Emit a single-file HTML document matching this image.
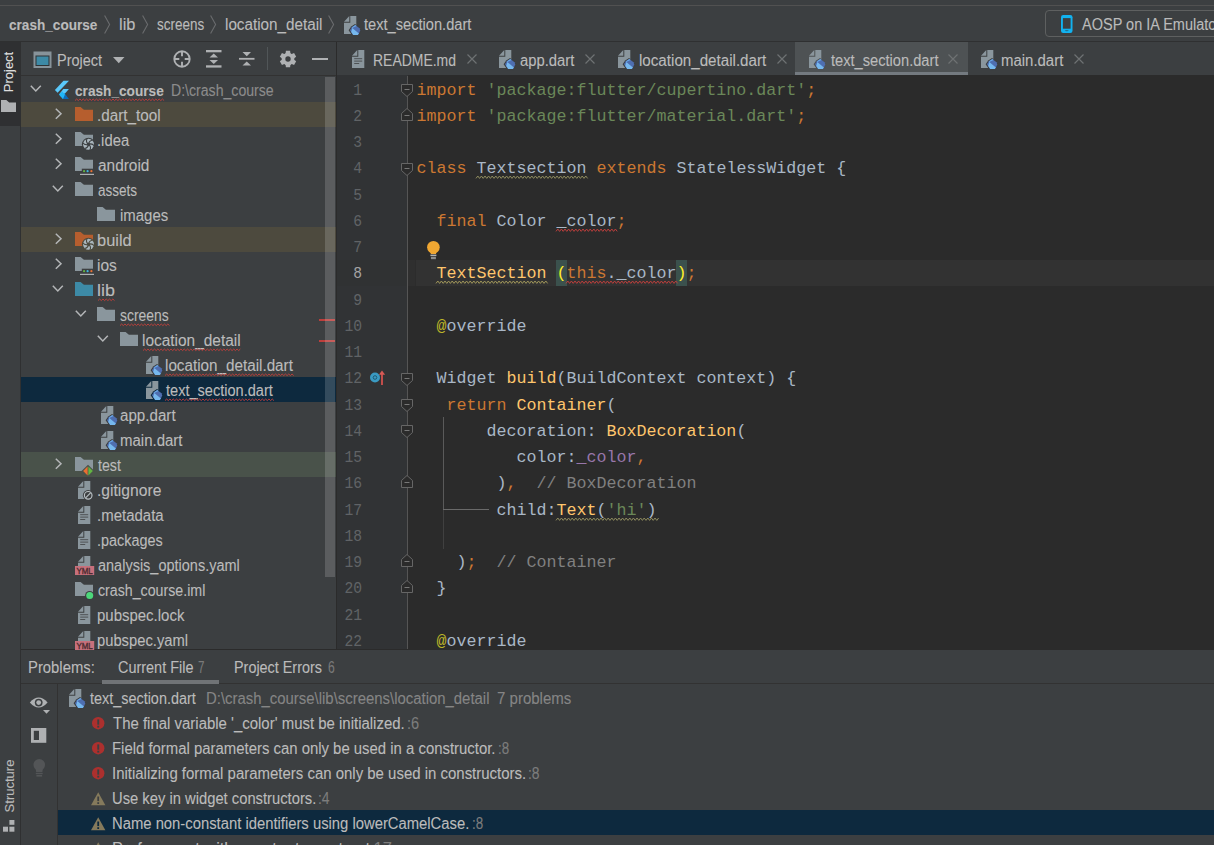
<!DOCTYPE html><html><head><meta charset="utf-8"><style>
*{margin:0;padding:0;box-sizing:border-box}
html,body{width:1214px;height:845px;overflow:hidden;background:#3c3f41;font-family:"Liberation Sans",sans-serif;font-size:14.4px;color:#bbbbbb}
.a{position:absolute}
.t{position:absolute;white-space:pre;line-height:20px;height:20px;transform-origin:0 50%;-webkit-text-stroke:0.1px currentColor}
svg{position:absolute;overflow:visible}
.cd{position:absolute;left:416.5px;font-family:"Liberation Mono",monospace;font-size:16.67px;white-space:pre;line-height:20px;color:#a9b7c6}
.ln{position:absolute;font-family:"Liberation Mono",monospace;font-size:16.67px;white-space:pre;line-height:20px;color:#606366;text-align:right;width:40px;left:321.5px;transform:scaleX(0.88);transform-origin:100% 50%}
.k{color:#cc7832}.s{color:#6a8759}.f{color:#ffc66d}.c{color:#808080}.p{color:#9876aa}.an{color:#bbb529}
</style></head><body><div class="a" style="left:0px;top:5px;width:1214px;height:1px;background:#515151;"></div>
<div class="a" style="left:0px;top:41px;width:1214px;height:1px;background:#2f3031;"></div>
<div class="a" style="left:0px;top:42px;width:20px;height:84px;background:#2f3032;"></div>
<div class="a" style="left:20px;top:42px;width:1px;height:803px;background:#2f3031;"></div>
<div class="a" style="left:21px;top:75px;width:315px;height:1px;background:#323232;"></div>
<div class="a" style="left:336px;top:42px;width:1px;height:608px;background:#2b2b2b;"></div>
<div class="a" style="left:337px;top:75px;width:877px;height:575px;background:#2b2b2b;"></div>
<div class="a" style="left:337px;top:75px;width:71px;height:575px;background:#313335;"></div>
<div class="a" style="left:408px;top:260px;width:806px;height:26px;background:#323232;"></div>
<div class="a" style="left:337px;top:260px;width:71px;height:26px;background:#303233;"></div>
<div class="a" style="left:408px;top:260px;width:7px;height:26px;background:#2f2f2f;"></div>
<div class="a" style="left:415px;top:260px;width:1px;height:26px;background:#2c2c2c;"></div>
<div class="a" style="left:556px;top:260px;width:11px;height:26px;background:#3b514d;"></div>
<div class="a" style="left:676px;top:260px;width:11px;height:26px;background:#3b514d;"></div>
<div class="a" style="left:795px;top:42px;width:173px;height:33px;background:#4e5254;"></div>
<div class="a" style="left:795px;top:72px;width:173px;height:3px;background:#747a80;"></div>
<div class="a" style="left:21px;top:649px;width:1193px;height:1px;background:#2b2b2b;"></div>
<div class="a" style="left:21px;top:683px;width:1193px;height:1px;background:#323232;"></div>
<div class="a" style="left:57px;top:684px;width:1px;height:161px;background:#323232;"></div>
<div class="a" style="left:102px;top:680px;width:117px;height:4px;background:#707376;"></div>
<div class="a" style="left:58px;top:810px;width:1156px;height:25px;background:#0d293e;"></div>
<div class="a" style="left:21px;top:102px;width:315px;height:25px;background:#4d4a3e;"></div>
<div class="a" style="left:21px;top:227px;width:315px;height:25px;background:#4d4a3e;"></div>
<div class="a" style="left:21px;top:377px;width:315px;height:25px;background:#0d293e;"></div>
<div class="a" style="left:21px;top:452px;width:315px;height:25px;background:#49524a;"></div>
<div class="t" id="t0" style="left:9.06px;top:14.56px;font-size:15.4px;font-weight:bold;transform:scaleX(0.8830);">crash_course</div>
<div class="t" id="t1" style="left:119.17px;top:15.39px;font-size:15.6px;transform:scaleX(1.0533);">lib</div>
<div class="t" id="t2" style="left:157.00px;top:15.39px;font-size:15.6px;transform:scaleX(0.8636);">screens</div>
<div class="t" id="t3" style="left:224.80px;top:15.39px;font-size:15.6px;transform:scaleX(0.9778);">location_detail</div>
<div class="t" id="t4" style="left:364.38px;top:15.39px;font-size:15.6px;transform:scaleX(0.9383);">text_section.dart</div>
<div class="t" id="t5" style="left:1082.30px;top:15.29px;font-size:15.6px;transform:scaleX(0.93)">AOSP on IA Emulator</div>
<div class="t" id="t6" style="left:57.04px;top:50.79px;font-size:15.6px;transform:scaleX(0.9286);">Project</div>
<div class="a" style="left:0;top:0;width:1214px;height:845px;clip-path:inset(76px 878px 196px 21px)">
<div class="t" id="t7" style="left:74.86px;top:80.56px;font-size:15.4px;font-weight:bold;transform:scaleX(0.8870);">crash_course</div>
<div class="t" id="t8" style="left:171.05px;top:81.29px;font-size:15.6px;color:#8c8c8c;transform:scaleX(0.9044);">D:\crash_course</div>
<div class="t" id="t9" style="left:96.81px;top:106.29px;font-size:15.6px;transform:scaleX(0.9781);">.dart_tool</div>
<div class="t" id="t10" style="left:96.84px;top:131.29px;font-size:15.6px;transform:scaleX(0.9515);">.idea</div>
<div class="t" id="t11" style="left:97.79px;top:156.29px;font-size:15.6px;transform:scaleX(0.9885);">android</div>
<div class="t" id="t12" style="left:97.81px;top:181.29px;font-size:15.6px;transform:scaleX(0.8667);">assets</div>
<div class="t" id="t13" style="left:119.82px;top:206.29px;font-size:15.6px;transform:scaleX(0.9580);">images</div>
<div class="t" id="t14" style="left:96.73px;top:231.29px;font-size:15.6px;transform:scaleX(1.0531);">build</div>
<div class="t" id="t15" style="left:96.80px;top:256.29px;font-size:15.6px;transform:scaleX(0.9947);">ios</div>
<div class="t" id="t16" style="left:96.62px;top:281.29px;font-size:15.6px;transform:scaleX(1.1500);">lib</div>
<div class="t" id="t17" style="left:119.86px;top:306.29px;font-size:15.6px;transform:scaleX(0.8907);">screens</div>
<div class="t" id="t18" style="left:141.80px;top:331.29px;font-size:15.6px;transform:scaleX(0.9898);">location_detail</div>
<div class="t" id="t19" style="left:164.80px;top:356.29px;font-size:15.6px;transform:scaleX(0.9771);">location_detail.dart</div>
<div class="t" id="t20" style="left:165.76px;top:381.29px;font-size:15.6px;transform:scaleX(0.9339);">text_section.dart</div>
<div class="t" id="t21" style="left:119.81px;top:406.29px;font-size:15.6px;transform:scaleX(0.9719);">app.dart</div>
<div class="t" id="t22" style="left:119.81px;top:431.29px;font-size:15.6px;transform:scaleX(0.9615);">main.dart</div>
<div class="t" id="t23" style="left:97.80px;top:456.29px;font-size:15.6px;transform:scaleX(0.9115);">test</div>
<div class="t" id="t24" style="left:96.79px;top:481.29px;font-size:15.6px;transform:scaleX(1.0032);">.gitignore</div>
<div class="t" id="t25" style="left:96.83px;top:506.29px;font-size:15.6px;transform:scaleX(0.9609);">.metadata</div>
<div class="t" id="t26" style="left:96.88px;top:531.29px;font-size:15.6px;transform:scaleX(0.9229);">.packages</div>
<div class="t" id="t27" style="left:97.80px;top:556.29px;font-size:15.6px;transform:scaleX(0.9296);">analysis_options.yaml</div>
<div class="t" id="t28" style="left:97.80px;top:581.29px;font-size:15.6px;transform:scaleX(0.9103);">crash_course.iml</div>
<div class="t" id="t29" style="left:96.84px;top:606.29px;font-size:15.6px;transform:scaleX(0.9600);">pubspec.lock</div>
<div class="t" id="t30" style="left:96.85px;top:631.29px;font-size:15.6px;transform:scaleX(0.9463);">pubspec.yaml</div>
</div>
<div class="t" id="t31" style="left:373.05px;top:50.79px;font-size:15.6px;transform:scaleX(0.8946);">README.md</div>
<div class="t" id="t32" style="left:520.00px;top:50.79px;font-size:15.6px;transform:scaleX(0.9500);">app.dart</div>
<div class="t" id="t33" style="left:639.01px;top:50.79px;font-size:15.6px;transform:scaleX(0.9718);">location_detail.dart</div>
<div class="t" id="t34" style="left:830.97px;top:50.79px;font-size:15.6px;transform:scaleX(0.9391);">text_section.dart</div>
<div class="t" id="t35" style="left:1001.04px;top:50.79px;font-size:15.6px;transform:scaleX(0.9585);">main.dart</div>
<div class="t" id="t36" style="left:28.45px;top:658.39px;font-size:15.6px;transform:scaleX(0.9515);">Problems:</div>
<div class="t" id="t37" style="left:118.00px;top:658.39px;font-size:15.6px;transform:scaleX(0.9259);">Current File</div>
<div class="t" id="t38" style="left:198.00px;top:658.39px;font-size:15.6px;color:#7a7a7a;transform:scaleX(0.7444);">7</div>
<div class="t" id="t39" style="left:233.84px;top:658.39px;font-size:15.6px;transform:scaleX(0.9221);">Project Errors</div>
<div class="t" id="t40" style="left:328.00px;top:658.39px;font-size:15.6px;color:#7a7a7a;transform:scaleX(0.7778);">6</div>
<div class="t" id="t41" style="left:90.15px;top:689.49px;font-size:15.6px;transform:scaleX(0.9241);">text_section.dart</div>
<div class="t" id="t42" style="left:205.63px;top:689.49px;font-size:15.6px;color:#858585;transform:scaleX(0.9563);">D:\crash_course\lib\screens\location_detail</div>
<div class="t" id="t43" style="left:112.77px;top:714.49px;font-size:15.6px;transform:scaleX(0.9592);">The final variable '_color' must be initialized.</div>
<div class="t" id="t44" style="left:407.07px;top:714.49px;font-size:15.6px;color:#7d7d7d;transform:scaleX(0.9333);">:6</div>
<div class="t" id="t45" style="left:111.82px;top:739.49px;font-size:15.6px;transform:scaleX(0.9555);">Field formal parameters can only be used in a constructor.</div>
<div class="t" id="t46" style="left:497.57px;top:739.49px;font-size:15.6px;color:#7d7d7d;transform:scaleX(0.8583);">:8</div>
<div class="t" id="t47" style="left:111.82px;top:764.49px;font-size:15.6px;transform:scaleX(0.9595);">Initializing formal parameters can only be used in constructors.</div>
<div class="t" id="t48" style="left:528.48px;top:764.49px;font-size:15.6px;color:#7d7d7d;transform:scaleX(0.8917);">:8</div>
<div class="t" id="t49" style="left:111.82px;top:789.49px;font-size:15.6px;transform:scaleX(0.9467);">Use key in widget constructors.</div>
<div class="t" id="t50" style="left:318.29px;top:789.49px;font-size:15.6px;color:#7d7d7d;transform:scaleX(0.8917);">:4</div>
<div class="t" id="t51" style="left:111.82px;top:814.49px;font-size:15.6px;transform:scaleX(0.9499);">Name non-constant identifiers using lowerCamelCase.</div>
<div class="t" id="t52" style="left:471.57px;top:814.49px;font-size:15.6px;color:#7d7d7d;transform:scaleX(0.8583);">:8</div>
<div class="t" id="t53" style="left:111.76px;top:839.49px;font-size:15.6px;transform:scaleX(1.0449);">Prefer const with constant constructors.</div>
<div class="t" id="t54" style="left:368.71px;top:839.49px;font-size:15.6px;color:#7d7d7d;transform:scaleX(1.0588);">:17</div>
<div class="t" id="t55" style="left:496.81px;top:689.49px;font-size:15.6px;color:#858585;transform:scaleX(0.9636);">7 problems</div>
<div class="t" style="left:-15.9px;top:62.2px;width:50px;height:20px;transform:rotate(-90deg);transform-origin:50% 50%;color:#dddddd;font-size:13px;text-align:center">Project</div>
<div class="t" style="left:-15.2px;top:776.4px;width:60px;height:20px;transform:rotate(-90deg);transform-origin:50% 50%;color:#bbbbbb;font-size:13px;text-align:center;margin-left:-5px">Structure</div>
<div class="ln" style="top:80.56px;">1</div>
<div class="cd" style="top:80.56px"><span class="k">import </span><span class="s">'package:flutter/cupertino.dart'</span><span class="k">;</span></div>
<div class="ln" style="top:106.81px;">2</div>
<div class="cd" style="top:106.81px"><span class="k">import </span><span class="s">'package:flutter/material.dart'</span><span class="k">;</span></div>
<div class="ln" style="top:133.06px;">3</div>
<div class="cd" style="top:133.06px"></div>
<div class="ln" style="top:159.31px;">4</div>
<div class="cd" style="top:159.31px"><span class="k">class </span>Textsection <span class="k">extends </span>StatelessWidget {</div>
<div class="ln" style="top:185.56px;">5</div>
<div class="cd" style="top:185.56px"></div>
<div class="ln" style="top:211.81px;">6</div>
<div class="cd" style="top:211.81px">  <span class="k">final </span>Color _color<span class="k">;</span></div>
<div class="ln" style="top:238.06px;">7</div>
<div class="cd" style="top:238.06px"></div>
<div class="ln" style="top:264.31px;color:#a4a3a3">8</div>
<div class="cd" style="top:264.31px">  <span class="f">TextSection</span> <span style="color:#ffef28">(</span><span class="k">this</span>._color<span style="color:#ffef28">)</span><span class="k">;</span></div>
<div class="ln" style="top:290.56px;">9</div>
<div class="cd" style="top:290.56px"></div>
<div class="ln" style="top:316.81px;">10</div>
<div class="cd" style="top:316.81px">  <span class="an">@</span>override</div>
<div class="ln" style="top:343.06px;">11</div>
<div class="cd" style="top:343.06px"></div>
<div class="ln" style="top:369.31px;">12</div>
<div class="cd" style="top:369.31px">  Widget <span class="f">build</span>(BuildContext context) {</div>
<div class="ln" style="top:395.56px;">13</div>
<div class="cd" style="top:395.56px">   <span class="k">return </span><span class="f">Container</span>(</div>
<div class="ln" style="top:421.81px;">14</div>
<div class="cd" style="top:421.81px">       decoration: <span class="f">BoxDecoration</span>(</div>
<div class="ln" style="top:448.06px;">15</div>
<div class="cd" style="top:448.06px">          color:<span class="p">_color</span><span class="k">,</span></div>
<div class="ln" style="top:474.31px;">16</div>
<div class="cd" style="top:474.31px">        )<span class="k">,  </span><span class="c">// BoxDecoration</span></div>
<div class="ln" style="top:500.56px;">17</div>
<div class="cd" style="top:500.56px">        child:<span class="f">Text</span>(<span class="s">'hi'</span>)</div>
<div class="ln" style="top:526.81px;">18</div>
<div class="cd" style="top:526.81px"></div>
<div class="ln" style="top:553.06px;">19</div>
<div class="cd" style="top:553.06px">    )<span class="k">;  </span><span class="c">// Container</span></div>
<div class="ln" style="top:579.31px;">20</div>
<div class="cd" style="top:579.31px">  }</div>
<div class="ln" style="top:605.56px;">21</div>
<div class="cd" style="top:605.56px"></div>
<div class="ln" style="top:631.81px;">22</div>
<div class="cd" style="top:631.81px">  <span class="an">@</span>override</div>
<svg style="left:103.8px;top:14.5px" width="7" height="20" viewBox="0 0 7 20"><path d="M0.6 0.6L5.6 9.5L0.6 18.4" fill="none" stroke="#6a6c6e" stroke-width="1.1"/></svg>
<svg style="left:142.3px;top:14.5px" width="7" height="20" viewBox="0 0 7 20"><path d="M0.6 0.6L5.6 9.5L0.6 18.4" fill="none" stroke="#6a6c6e" stroke-width="1.1"/></svg>
<svg style="left:210px;top:14.5px" width="7" height="20" viewBox="0 0 7 20"><path d="M0.6 0.6L5.6 9.5L0.6 18.4" fill="none" stroke="#6a6c6e" stroke-width="1.1"/></svg>
<svg style="left:328px;top:14.5px" width="7" height="20" viewBox="0 0 7 20"><path d="M0.6 0.6L5.6 9.5L0.6 18.4" fill="none" stroke="#6a6c6e" stroke-width="1.1"/></svg>
<svg style="left:344px;top:15.5px" width="20" height="20" viewBox="0 0 20 20"><path d="M0 5.7L5.3 0V5.7Z" fill="#8a969d"/><path d="M6.3 0H12.3V18H0V6.7H6.3Z" fill="#8a969d"/><path d="M4.6 14.3L7.2 10.4L11 8L16.4 11.8L17.4 14.6L15.8 18.4L14.4 20.2L8.6 20.1Z" fill="#3c3f41"/><path d="M5.9 14.3L7.9 11.2L11.3 9.1L15.5 12.3L16.2 14.6L14.9 17.5L13.8 19L9.2 18.9Z" fill="#4e6eb0"/><path d="M7.9 11.2L11.3 9.1L12.6 10.1L8.3 12Z" fill="#6aa8e8"/><path d="M8.3 12L14.9 17.5L13.8 19L9.2 18.9L7.2 16Z" fill="#76b8ee"/></svg>
<div class="a" style="left:1045px;top:10px;width:200px;height:27px;border:1px solid #5e6060;border-radius:4px"></div>
<svg style="left:1061.2px;top:15px" width="12" height="18" viewBox="0 0 12 18"><rect x="0" y="0" width="11.5" height="18" rx="2.2" fill="#12b2ef"/><rect x="1.9" y="3.1" width="7.7" height="10.6" fill="#3c3f41"/><ellipse cx="5.75" cy="15.6" rx="1.9" ry="0.7" fill="#1f6f90"/></svg>
<svg style="left:1px;top:99.5px" width="16" height="13" viewBox="0 0 16 13"><path d="M0 0H5.3L8.2 2.5H15V12H0Z" fill="#afb1b3"/></svg>
<svg style="left:2.7px;top:820px" width="14" height="14" viewBox="0 0 14 14"><rect x="6.4" y="0" width="5" height="4.8" fill="#afb1b3"/><rect x="0" y="6.7" width="5" height="5" fill="#afb1b3"/><rect x="6.4" y="6.7" width="5" height="5" fill="#afb1b3"/></svg>
<svg style="left:32.5px;top:51px" width="19" height="17" viewBox="0 0 19 17"><rect x="0.5" y="0.5" width="18" height="16.5" fill="#87939a"/><rect x="2.5" y="4.5" width="14" height="10.5" fill="#2f3335"/><rect x="3.5" y="5.5" width="12" height="8.5" fill="#3d8aa6"/></svg>
<svg style="left:113px;top:57px" width="12" height="7" viewBox="0 0 12 7"><path d="M0 0H11.5L5.75 6.2Z" fill="#afb1b3"/></svg>
<svg style="left:173px;top:50px" width="18" height="18" viewBox="0 0 18 18"><circle cx="9" cy="9" r="7.7" fill="none" stroke="#afb1b3" stroke-width="1.9"/><path d="M9 1.5V6.3M9 11.7V16.5M1.5 9H6.3M11.7 9H16.5" stroke="#afb1b3" stroke-width="1.9"/></svg>
<svg style="left:206px;top:50px" width="16" height="18" viewBox="0 0 16 18"><rect x="0" y="0" width="15.5" height="2.3" fill="#afb1b3"/><rect x="0" y="15.3" width="15.5" height="2.3" fill="#afb1b3"/><path d="M3.5 7.6L7.75 3.6L12 7.6Z M3.5 10L7.75 14L12 10Z" fill="#afb1b3"/></svg>
<svg style="left:239px;top:50px" width="16" height="18" viewBox="0 0 16 18"><rect x="0" y="7.9" width="15.5" height="1.8" fill="#afb1b3"/><path d="M3.5 2L7.75 6.2L12 2Z M3.5 15.6L7.75 11.4L12 15.6Z" fill="#afb1b3"/></svg>
<div class="a" style="left:267px;top:47px;width:1px;height:23px;background:#515658;"></div>
<svg style="left:279px;top:50px" width="18" height="18" viewBox="0 0 18 18"><g fill="#afb1b3"><path d="M6.9 0.8H11.1L11.6 4.5H6.4Z" transform="rotate(0 9 9)"/><path d="M6.9 0.8H11.1L11.6 4.5H6.4Z" transform="rotate(60 9 9)"/><path d="M6.9 0.8H11.1L11.6 4.5H6.4Z" transform="rotate(120 9 9)"/><path d="M6.9 0.8H11.1L11.6 4.5H6.4Z" transform="rotate(180 9 9)"/><path d="M6.9 0.8H11.1L11.6 4.5H6.4Z" transform="rotate(240 9 9)"/><path d="M6.9 0.8H11.1L11.6 4.5H6.4Z" transform="rotate(300 9 9)"/><circle cx="9" cy="9" r="6.3"/></g><circle cx="9" cy="9" r="2.7" fill="#3c3f41"/></svg>
<div class="a" style="left:312.3px;top:58px;width:15.4px;height:2.3px;background:#afb1b3;"></div>
<svg style="left:29.500000000000007px;top:85.4px" width="12" height="8" viewBox="0 0 12 8"><path d="M0.8 0.8L5.8 6L10.8 0.8" fill="none" stroke="#b4b6b8" stroke-width="1.5"/></svg>
<svg style="left:49.900000000000006px;top:80px" width="20" height="20" viewBox="0 0 20 20"><path d="M4.9 9.9L13.5 0.8H19L7.6 12.7Z" fill="#5ac8fa"/><path d="M13.3 9.1H18.9L14.8 13.7L9 14.5Z" fill="#5ac8fa"/><path d="M9 14.5L14.8 13.5L13 18.9Z" fill="#1eb4f5"/><path d="M12.2 15.8L14.8 13.5L18.9 18.9H13Z" fill="#0b6ab8"/><path d="M9 14.5L12.2 11.4L15 14.4L13 18.9Z" fill="#21b6f7"/></svg>
<svg style="left:54.50000000000001px;top:108.3px" width="8" height="12" viewBox="0 0 8 12"><path d="M0.8 0.8L6 5.8L0.8 10.8" fill="none" stroke="#b4b6b8" stroke-width="1.5"/></svg>
<svg style="left:74.9px;top:107px" width="20" height="20" viewBox="0 0 20 20"><path d="M0 0H5.6L8.9 2.7H18V14H0Z" fill="#b65e2e"/></svg>
<svg style="left:54.50000000000001px;top:133.3px" width="8" height="12" viewBox="0 0 8 12"><path d="M0.8 0.8L6 5.8L0.8 10.8" fill="none" stroke="#b4b6b8" stroke-width="1.5"/></svg>
<svg style="left:74.9px;top:132px" width="20" height="20" viewBox="0 0 20 20"><path d="M0 0H5.6L8.9 2.7H18V14H0Z" fill="#8a969d"/><circle cx="13.5" cy="12.3" r="6.6" fill="#3c3f41"/><circle cx="13.5" cy="12.3" r="5.5" fill="#a9b6bd"/><path d="M13.5 12.3 Q14.05 8.450000000000001 17.625 8.175" fill="none" stroke="#3c3f41" stroke-width="1.1" transform="rotate(0 13.5 12.3)"/><path d="M13.5 12.3 Q14.05 8.450000000000001 17.625 8.175" fill="none" stroke="#3c3f41" stroke-width="1.1" transform="rotate(60 13.5 12.3)"/><path d="M13.5 12.3 Q14.05 8.450000000000001 17.625 8.175" fill="none" stroke="#3c3f41" stroke-width="1.1" transform="rotate(120 13.5 12.3)"/><path d="M13.5 12.3 Q14.05 8.450000000000001 17.625 8.175" fill="none" stroke="#3c3f41" stroke-width="1.1" transform="rotate(180 13.5 12.3)"/><path d="M13.5 12.3 Q14.05 8.450000000000001 17.625 8.175" fill="none" stroke="#3c3f41" stroke-width="1.1" transform="rotate(240 13.5 12.3)"/><path d="M13.5 12.3 Q14.05 8.450000000000001 17.625 8.175" fill="none" stroke="#3c3f41" stroke-width="1.1" transform="rotate(300 13.5 12.3)"/><circle cx="13.5" cy="12.3" r="1.65" fill="#3c3f41"/></svg>
<svg style="left:54.50000000000001px;top:158.3px" width="8" height="12" viewBox="0 0 8 12"><path d="M0.8 0.8L6 5.8L0.8 10.8" fill="none" stroke="#b4b6b8" stroke-width="1.5"/></svg>
<svg style="left:74.9px;top:157px" width="20" height="20" viewBox="0 0 20 20"><path d="M0 0H5.6L8.9 2.7H18V14H0Z" fill="#8a969d"/><rect x="6.8" y="11.7" width="12" height="3.6" fill="#3c3f41"/><circle cx="9.1" cy="14.2" r="1.1" fill="#62b543"/><circle cx="12.6" cy="14.2" r="1.1" fill="#40b6e0"/><circle cx="16.4" cy="14.2" r="1.1" fill="#e96f31"/><rect x="5" y="16.8" width="14" height="1.2" fill="#afb1b3"/></svg>
<svg style="left:52.00000000000001px;top:185.4px" width="12" height="8" viewBox="0 0 12 8"><path d="M0.8 0.8L5.8 6L10.8 0.8" fill="none" stroke="#b4b6b8" stroke-width="1.5"/></svg>
<svg style="left:74.9px;top:182px" width="20" height="20" viewBox="0 0 20 20"><path d="M0 0H5.6L8.9 2.7H18V14H0Z" fill="#8a969d"/></svg>
<svg style="left:97.4px;top:207px" width="20" height="20" viewBox="0 0 20 20"><path d="M0 0H5.6L8.9 2.7H18V14H0Z" fill="#8a969d"/></svg>
<svg style="left:54.50000000000001px;top:233.3px" width="8" height="12" viewBox="0 0 8 12"><path d="M0.8 0.8L6 5.8L0.8 10.8" fill="none" stroke="#b4b6b8" stroke-width="1.5"/></svg>
<svg style="left:74.9px;top:232px" width="20" height="20" viewBox="0 0 20 20"><path d="M0 0H5.6L8.9 2.7H18V14H0Z" fill="#b65e2e"/><circle cx="13.5" cy="12.3" r="6.6" fill="#4d4a3e"/><circle cx="13.5" cy="12.3" r="5.5" fill="#a9b6bd"/><path d="M13.5 12.3 Q14.05 8.450000000000001 17.625 8.175" fill="none" stroke="#4d4a3e" stroke-width="1.1" transform="rotate(0 13.5 12.3)"/><path d="M13.5 12.3 Q14.05 8.450000000000001 17.625 8.175" fill="none" stroke="#4d4a3e" stroke-width="1.1" transform="rotate(60 13.5 12.3)"/><path d="M13.5 12.3 Q14.05 8.450000000000001 17.625 8.175" fill="none" stroke="#4d4a3e" stroke-width="1.1" transform="rotate(120 13.5 12.3)"/><path d="M13.5 12.3 Q14.05 8.450000000000001 17.625 8.175" fill="none" stroke="#4d4a3e" stroke-width="1.1" transform="rotate(180 13.5 12.3)"/><path d="M13.5 12.3 Q14.05 8.450000000000001 17.625 8.175" fill="none" stroke="#4d4a3e" stroke-width="1.1" transform="rotate(240 13.5 12.3)"/><path d="M13.5 12.3 Q14.05 8.450000000000001 17.625 8.175" fill="none" stroke="#4d4a3e" stroke-width="1.1" transform="rotate(300 13.5 12.3)"/><circle cx="13.5" cy="12.3" r="1.65" fill="#4d4a3e"/></svg>
<svg style="left:54.50000000000001px;top:258.3px" width="8" height="12" viewBox="0 0 8 12"><path d="M0.8 0.8L6 5.8L0.8 10.8" fill="none" stroke="#b4b6b8" stroke-width="1.5"/></svg>
<svg style="left:74.9px;top:257px" width="20" height="20" viewBox="0 0 20 20"><path d="M0 0H5.6L8.9 2.7H18V14H0Z" fill="#8a969d"/><rect x="6.8" y="11.7" width="12" height="3.6" fill="#3c3f41"/><circle cx="9.1" cy="14.2" r="1.1" fill="#62b543"/><circle cx="12.6" cy="14.2" r="1.1" fill="#40b6e0"/><circle cx="16.4" cy="14.2" r="1.1" fill="#e96f31"/><rect x="5" y="16.8" width="14" height="1.2" fill="#afb1b3"/></svg>
<svg style="left:52.00000000000001px;top:285.4px" width="12" height="8" viewBox="0 0 12 8"><path d="M0.8 0.8L5.8 6L10.8 0.8" fill="none" stroke="#b4b6b8" stroke-width="1.5"/></svg>
<svg style="left:74.9px;top:282px" width="20" height="20" viewBox="0 0 20 20"><path d="M0 0H5.6L8.9 2.7H18V14H0Z" fill="#3d8aa6"/></svg>
<svg style="left:74.5px;top:310.4px" width="12" height="8" viewBox="0 0 12 8"><path d="M0.8 0.8L5.8 6L10.8 0.8" fill="none" stroke="#b4b6b8" stroke-width="1.5"/></svg>
<svg style="left:97.4px;top:307px" width="20" height="20" viewBox="0 0 20 20"><path d="M0 0H5.6L8.9 2.7H18V14H0Z" fill="#8a969d"/></svg>
<svg style="left:97.0px;top:335.4px" width="12" height="8" viewBox="0 0 12 8"><path d="M0.8 0.8L5.8 6L10.8 0.8" fill="none" stroke="#b4b6b8" stroke-width="1.5"/></svg>
<svg style="left:119.9px;top:332px" width="20" height="20" viewBox="0 0 20 20"><path d="M0 0H5.6L8.9 2.7H18V14H0Z" fill="#8a969d"/></svg>
<svg style="left:146.20000000000002px;top:356px" width="20" height="20" viewBox="0 0 20 20"><path d="M0 5.7L5.3 0V5.7Z" fill="#8a969d"/><path d="M6.3 0H12.3V18H0V6.7H6.3Z" fill="#8a969d"/><path d="M4.6 14.3L7.2 10.4L11 8L16.4 11.8L17.4 14.6L15.8 18.4L14.4 20.2L8.6 20.1Z" fill="#3c3f41"/><path d="M5.9 14.3L7.9 11.2L11.3 9.1L15.5 12.3L16.2 14.6L14.9 17.5L13.8 19L9.2 18.9Z" fill="#4e6eb0"/><path d="M7.9 11.2L11.3 9.1L12.6 10.1L8.3 12Z" fill="#6aa8e8"/><path d="M8.3 12L14.9 17.5L13.8 19L9.2 18.9L7.2 16Z" fill="#76b8ee"/></svg>
<svg style="left:146.20000000000002px;top:381px" width="20" height="20" viewBox="0 0 20 20"><path d="M0 5.7L5.3 0V5.7Z" fill="#8a969d"/><path d="M6.3 0H12.3V18H0V6.7H6.3Z" fill="#8a969d"/><path d="M4.6 14.3L7.2 10.4L11 8L16.4 11.8L17.4 14.6L15.8 18.4L14.4 20.2L8.6 20.1Z" fill="#0d293e"/><path d="M5.9 14.3L7.9 11.2L11.3 9.1L15.5 12.3L16.2 14.6L14.9 17.5L13.8 19L9.2 18.9Z" fill="#4e6eb0"/><path d="M7.9 11.2L11.3 9.1L12.6 10.1L8.3 12Z" fill="#6aa8e8"/><path d="M8.3 12L14.9 17.5L13.8 19L9.2 18.9L7.2 16Z" fill="#76b8ee"/></svg>
<svg style="left:101.2px;top:406px" width="20" height="20" viewBox="0 0 20 20"><path d="M0 5.7L5.3 0V5.7Z" fill="#8a969d"/><path d="M6.3 0H12.3V18H0V6.7H6.3Z" fill="#8a969d"/><path d="M4.6 14.3L7.2 10.4L11 8L16.4 11.8L17.4 14.6L15.8 18.4L14.4 20.2L8.6 20.1Z" fill="#3c3f41"/><path d="M5.9 14.3L7.9 11.2L11.3 9.1L15.5 12.3L16.2 14.6L14.9 17.5L13.8 19L9.2 18.9Z" fill="#4e6eb0"/><path d="M7.9 11.2L11.3 9.1L12.6 10.1L8.3 12Z" fill="#6aa8e8"/><path d="M8.3 12L14.9 17.5L13.8 19L9.2 18.9L7.2 16Z" fill="#76b8ee"/></svg>
<svg style="left:101.2px;top:431px" width="20" height="20" viewBox="0 0 20 20"><path d="M0 5.7L5.3 0V5.7Z" fill="#8a969d"/><path d="M6.3 0H12.3V18H0V6.7H6.3Z" fill="#8a969d"/><path d="M4.6 14.3L7.2 10.4L11 8L16.4 11.8L17.4 14.6L15.8 18.4L14.4 20.2L8.6 20.1Z" fill="#3c3f41"/><path d="M5.9 14.3L7.9 11.2L11.3 9.1L15.5 12.3L16.2 14.6L14.9 17.5L13.8 19L9.2 18.9Z" fill="#4e6eb0"/><path d="M7.9 11.2L11.3 9.1L12.6 10.1L8.3 12Z" fill="#6aa8e8"/><path d="M8.3 12L14.9 17.5L13.8 19L9.2 18.9L7.2 16Z" fill="#76b8ee"/></svg>
<svg style="left:54.50000000000001px;top:458.3px" width="8" height="12" viewBox="0 0 8 12"><path d="M0.8 0.8L6 5.8L0.8 10.8" fill="none" stroke="#b4b6b8" stroke-width="1.5"/></svg>
<svg style="left:74.9px;top:457px" width="20" height="20" viewBox="0 0 20 20"><path d="M0 0H5.6L8.9 2.7H18V14H0Z" fill="#8a969d"/><path d="M13 7.8L19.5 14L13 20.2L6.5 14Z" fill="#49524a"/><path d="M12.6 9.5V18.5L8.2 14Z" fill="#e96f31"/><path d="M13.4 9.5V18.5L17.8 14Z" fill="#62b543"/></svg>
<svg style="left:77.7px;top:481px" width="20" height="20" viewBox="0 0 20 20"><path d="M0 5.7L5.3 0V5.7Z" fill="#8a969d"/><path d="M6.3 0H12.3V18H0V6.7H6.3Z" fill="#8a969d"/><circle cx="10.2" cy="14.3" r="5.3" fill="#3c3f41"/><circle cx="10.2" cy="14.3" r="3.8" fill="none" stroke="#b9c0c4" stroke-width="1.2"/><path d="M7.6 16.9L12.8 11.7" stroke="#b9c0c4" stroke-width="1.2"/></svg>
<svg style="left:77.7px;top:506px" width="20" height="20" viewBox="0 0 20 20"><path d="M0 5.7L5.3 0V5.7Z" fill="#8a969d"/><path d="M6.3 0H12.3V18H0V6.7H6.3Z" fill="#8a969d"/><rect x="2.2" y="8.2" width="8" height="1" fill="#4e5254"/><rect x="2.2" y="10.6" width="8" height="1" fill="#4e5254"/><rect x="2.2" y="13" width="5" height="1" fill="#4e5254"/></svg>
<svg style="left:77.7px;top:531px" width="20" height="20" viewBox="0 0 20 20"><path d="M0 5.7L5.3 0V5.7Z" fill="#8a969d"/><path d="M6.3 0H12.3V18H0V6.7H6.3Z" fill="#8a969d"/><rect x="2.2" y="8.2" width="8" height="1" fill="#4e5254"/><rect x="2.2" y="10.6" width="8" height="1" fill="#4e5254"/><rect x="2.2" y="13" width="5" height="1" fill="#4e5254"/></svg>
<svg style="left:77.7px;top:556px" width="20" height="20" viewBox="0 0 20 20"><path d="M0 5.7L5.3 0V5.7Z" fill="#8a969d"/><path d="M6.3 0H12.3V10H0V6.7H6.3Z" fill="#8a969d"/><rect x="-3" y="10" width="19.2" height="9" fill="#c7707c"/><text x="6.6" y="17.8" font-family="Liberation Sans" font-size="8.6" fill="#4a2c30" stroke="#4a2c30" stroke-width="0.35" text-anchor="middle" textLength="16.4" lengthAdjust="spacingAndGlyphs">YML</text></svg>
<svg style="left:74.9px;top:582px" width="20" height="20" viewBox="0 0 20 20"><path d="M0 0H5.6L8.9 2.7H18V14H0Z" fill="#8a969d"/><circle cx="14.7" cy="13.5" r="4.6" fill="#3c3f41"/><circle cx="14.7" cy="13.5" r="3.5" fill="#4cd77a"/></svg>
<svg style="left:77.7px;top:606px" width="20" height="20" viewBox="0 0 20 20"><path d="M0 5.7L5.3 0V5.7Z" fill="#8a969d"/><path d="M6.3 0H12.3V18H0V6.7H6.3Z" fill="#8a969d"/><rect x="2.2" y="8.2" width="8" height="1" fill="#4e5254"/><rect x="2.2" y="10.6" width="8" height="1" fill="#4e5254"/><rect x="2.2" y="13" width="5" height="1" fill="#4e5254"/></svg>
<svg style="left:77.7px;top:631px" width="20" height="20" viewBox="0 0 20 20"><path d="M0 5.7L5.3 0V5.7Z" fill="#8a969d"/><path d="M6.3 0H12.3V10H0V6.7H6.3Z" fill="#8a969d"/><rect x="-3" y="10" width="19.2" height="9" fill="#c7707c"/><text x="6.6" y="17.8" font-family="Liberation Sans" font-size="8.6" fill="#4a2c30" stroke="#4a2c30" stroke-width="0.35" text-anchor="middle" textLength="16.4" lengthAdjust="spacingAndGlyphs">YML</text></svg>
<svg style="left:75px;top:98.6px" width="91" height="4" viewBox="0 0 91 4"><path d="M0.00 1.60 L1.65 0.00 L3.30 1.60 L4.95 0.00 L6.60 1.60 L8.25 0.00 L9.90 1.60 L11.55 0.00 L13.20 1.60 L14.85 0.00 L16.50 1.60 L18.15 0.00 L19.80 1.60 L21.45 0.00 L23.10 1.60 L24.75 0.00 L26.40 1.60 L28.05 0.00 L29.70 1.60 L31.35 0.00 L33.00 1.60 L34.65 0.00 L36.30 1.60 L37.95 0.00 L39.60 1.60 L41.25 0.00 L42.90 1.60 L44.55 0.00 L46.20 1.60 L47.85 0.00 L49.50 1.60 L51.15 0.00 L52.80 1.60 L54.45 0.00 L56.10 1.60 L57.75 0.00 L59.40 1.60 L61.05 0.00 L62.70 1.60 L64.35 0.00 L66.00 1.60 L67.65 0.00 L69.30 1.60 L70.95 0.00 L72.60 1.60 L74.25 0.00 L75.90 1.60 L77.55 0.00 L79.20 1.60 L80.85 0.00 L82.50 1.60 L84.15 0.00 L85.80 1.60 L87.45 0.00 L89.10 1.60" fill="none" stroke="#bc3f3c" stroke-width="1.0"/></svg>
<svg style="left:98px;top:298.6px" width="18" height="4" viewBox="0 0 18 4"><path d="M0.00 1.60 L1.65 0.00 L3.30 1.60 L4.95 0.00 L6.60 1.60 L8.25 0.00 L9.90 1.60 L11.55 0.00 L13.20 1.60 L14.85 0.00 L16.50 1.60" fill="none" stroke="#bc3f3c" stroke-width="1.0"/></svg>
<svg style="left:120px;top:323.6px" width="50" height="4" viewBox="0 0 50 4"><path d="M0.00 1.60 L1.65 0.00 L3.30 1.60 L4.95 0.00 L6.60 1.60 L8.25 0.00 L9.90 1.60 L11.55 0.00 L13.20 1.60 L14.85 0.00 L16.50 1.60 L18.15 0.00 L19.80 1.60 L21.45 0.00 L23.10 1.60 L24.75 0.00 L26.40 1.60 L28.05 0.00 L29.70 1.60 L31.35 0.00 L33.00 1.60 L34.65 0.00 L36.30 1.60 L37.95 0.00 L39.60 1.60 L41.25 0.00 L42.90 1.60 L44.55 0.00 L46.20 1.60 L47.85 0.00 L49.50 1.60" fill="none" stroke="#bc3f3c" stroke-width="1.0"/></svg>
<svg style="left:143px;top:348.6px" width="99" height="4" viewBox="0 0 99 4"><path d="M0.00 1.60 L1.65 0.00 L3.30 1.60 L4.95 0.00 L6.60 1.60 L8.25 0.00 L9.90 1.60 L11.55 0.00 L13.20 1.60 L14.85 0.00 L16.50 1.60 L18.15 0.00 L19.80 1.60 L21.45 0.00 L23.10 1.60 L24.75 0.00 L26.40 1.60 L28.05 0.00 L29.70 1.60 L31.35 0.00 L33.00 1.60 L34.65 0.00 L36.30 1.60 L37.95 0.00 L39.60 1.60 L41.25 0.00 L42.90 1.60 L44.55 0.00 L46.20 1.60 L47.85 0.00 L49.50 1.60 L51.15 0.00 L52.80 1.60 L54.45 0.00 L56.10 1.60 L57.75 0.00 L59.40 1.60 L61.05 0.00 L62.70 1.60 L64.35 0.00 L66.00 1.60 L67.65 0.00 L69.30 1.60 L70.95 0.00 L72.60 1.60 L74.25 0.00 L75.90 1.60 L77.55 0.00 L79.20 1.60 L80.85 0.00 L82.50 1.60 L84.15 0.00 L85.80 1.60 L87.45 0.00 L89.10 1.60 L90.75 0.00 L92.40 1.60 L94.05 0.00 L95.70 1.60 L97.35 0.00" fill="none" stroke="#bc3f3c" stroke-width="1.0"/></svg>
<svg style="left:165px;top:373.6px" width="130" height="4" viewBox="0 0 130 4"><path d="M0.00 1.60 L1.65 0.00 L3.30 1.60 L4.95 0.00 L6.60 1.60 L8.25 0.00 L9.90 1.60 L11.55 0.00 L13.20 1.60 L14.85 0.00 L16.50 1.60 L18.15 0.00 L19.80 1.60 L21.45 0.00 L23.10 1.60 L24.75 0.00 L26.40 1.60 L28.05 0.00 L29.70 1.60 L31.35 0.00 L33.00 1.60 L34.65 0.00 L36.30 1.60 L37.95 0.00 L39.60 1.60 L41.25 0.00 L42.90 1.60 L44.55 0.00 L46.20 1.60 L47.85 0.00 L49.50 1.60 L51.15 0.00 L52.80 1.60 L54.45 0.00 L56.10 1.60 L57.75 0.00 L59.40 1.60 L61.05 0.00 L62.70 1.60 L64.35 0.00 L66.00 1.60 L67.65 0.00 L69.30 1.60 L70.95 0.00 L72.60 1.60 L74.25 0.00 L75.90 1.60 L77.55 0.00 L79.20 1.60 L80.85 0.00 L82.50 1.60 L84.15 0.00 L85.80 1.60 L87.45 0.00 L89.10 1.60 L90.75 0.00 L92.40 1.60 L94.05 0.00 L95.70 1.60 L97.35 0.00 L99.00 1.60 L100.65 0.00 L102.30 1.60 L103.95 0.00 L105.60 1.60 L107.25 0.00 L108.90 1.60 L110.55 0.00 L112.20 1.60 L113.85 0.00 L115.50 1.60 L117.15 0.00 L118.80 1.60 L120.45 0.00 L122.10 1.60 L123.75 0.00 L125.40 1.60 L127.05 0.00 L128.70 1.60" fill="none" stroke="#bc3f3c" stroke-width="1.0"/></svg>
<svg style="left:165px;top:398.6px" width="110" height="4" viewBox="0 0 110 4"><path d="M0.00 1.60 L1.65 0.00 L3.30 1.60 L4.95 0.00 L6.60 1.60 L8.25 0.00 L9.90 1.60 L11.55 0.00 L13.20 1.60 L14.85 0.00 L16.50 1.60 L18.15 0.00 L19.80 1.60 L21.45 0.00 L23.10 1.60 L24.75 0.00 L26.40 1.60 L28.05 0.00 L29.70 1.60 L31.35 0.00 L33.00 1.60 L34.65 0.00 L36.30 1.60 L37.95 0.00 L39.60 1.60 L41.25 0.00 L42.90 1.60 L44.55 0.00 L46.20 1.60 L47.85 0.00 L49.50 1.60 L51.15 0.00 L52.80 1.60 L54.45 0.00 L56.10 1.60 L57.75 0.00 L59.40 1.60 L61.05 0.00 L62.70 1.60 L64.35 0.00 L66.00 1.60 L67.65 0.00 L69.30 1.60 L70.95 0.00 L72.60 1.60 L74.25 0.00 L75.90 1.60 L77.55 0.00 L79.20 1.60 L80.85 0.00 L82.50 1.60 L84.15 0.00 L85.80 1.60 L87.45 0.00 L89.10 1.60 L90.75 0.00 L92.40 1.60 L94.05 0.00 L95.70 1.60 L97.35 0.00 L99.00 1.60 L100.65 0.00 L102.30 1.60 L103.95 0.00 L105.60 1.60 L107.25 0.00 L108.90 1.60" fill="none" stroke="#bc3f3c" stroke-width="1.0"/></svg>
<div class="a" style="left:319px;top:319px;width:16px;height:2px;background:#bc3f3c;"></div>
<div class="a" style="left:319px;top:340px;width:16px;height:2px;background:#bc3f3c;"></div>
<div class="a" style="left:325px;top:77px;width:10px;height:500px;background:rgba(255,255,255,0.16);"></div>
<svg style="left:352px;top:50px" width="20" height="20" viewBox="0 0 20 20"><path d="M0 5.7L5.3 0V5.7Z" fill="#8a969d"/><path d="M6.3 0H12.3V18H0V6.7H6.3Z" fill="#8a969d"/><rect x="2.2" y="8.2" width="8" height="1" fill="#4e5254"/><rect x="2.2" y="10.6" width="8" height="1" fill="#4e5254"/><rect x="2.2" y="13" width="5" height="1" fill="#4e5254"/></svg>
<svg style="left:498.5px;top:50px" width="20" height="20" viewBox="0 0 20 20"><path d="M0 5.7L5.3 0V5.7Z" fill="#8a969d"/><path d="M6.3 0H12.3V18H0V6.7H6.3Z" fill="#8a969d"/><path d="M4.6 14.3L7.2 10.4L11 8L16.4 11.8L17.4 14.6L15.8 18.4L14.4 20.2L8.6 20.1Z" fill="#3c3f41"/><path d="M5.9 14.3L7.9 11.2L11.3 9.1L15.5 12.3L16.2 14.6L14.9 17.5L13.8 19L9.2 18.9Z" fill="#4e6eb0"/><path d="M7.9 11.2L11.3 9.1L12.6 10.1L8.3 12Z" fill="#6aa8e8"/><path d="M8.3 12L14.9 17.5L13.8 19L9.2 18.9L7.2 16Z" fill="#76b8ee"/></svg>
<svg style="left:618px;top:50px" width="20" height="20" viewBox="0 0 20 20"><path d="M0 5.7L5.3 0V5.7Z" fill="#8a969d"/><path d="M6.3 0H12.3V18H0V6.7H6.3Z" fill="#8a969d"/><path d="M4.6 14.3L7.2 10.4L11 8L16.4 11.8L17.4 14.6L15.8 18.4L14.4 20.2L8.6 20.1Z" fill="#3c3f41"/><path d="M5.9 14.3L7.9 11.2L11.3 9.1L15.5 12.3L16.2 14.6L14.9 17.5L13.8 19L9.2 18.9Z" fill="#4e6eb0"/><path d="M7.9 11.2L11.3 9.1L12.6 10.1L8.3 12Z" fill="#6aa8e8"/><path d="M8.3 12L14.9 17.5L13.8 19L9.2 18.9L7.2 16Z" fill="#76b8ee"/></svg>
<svg style="left:809px;top:50px" width="20" height="20" viewBox="0 0 20 20"><path d="M0 5.7L5.3 0V5.7Z" fill="#8a969d"/><path d="M6.3 0H12.3V18H0V6.7H6.3Z" fill="#8a969d"/><path d="M4.6 14.3L7.2 10.4L11 8L16.4 11.8L17.4 14.6L15.8 18.4L14.4 20.2L8.6 20.1Z" fill="#4e5254"/><path d="M5.9 14.3L7.9 11.2L11.3 9.1L15.5 12.3L16.2 14.6L14.9 17.5L13.8 19L9.2 18.9Z" fill="#4e6eb0"/><path d="M7.9 11.2L11.3 9.1L12.6 10.1L8.3 12Z" fill="#6aa8e8"/><path d="M8.3 12L14.9 17.5L13.8 19L9.2 18.9L7.2 16Z" fill="#76b8ee"/></svg>
<svg style="left:980.5px;top:50px" width="20" height="20" viewBox="0 0 20 20"><path d="M0 5.7L5.3 0V5.7Z" fill="#8a969d"/><path d="M6.3 0H12.3V18H0V6.7H6.3Z" fill="#8a969d"/><path d="M4.6 14.3L7.2 10.4L11 8L16.4 11.8L17.4 14.6L15.8 18.4L14.4 20.2L8.6 20.1Z" fill="#3c3f41"/><path d="M5.9 14.3L7.9 11.2L11.3 9.1L15.5 12.3L16.2 14.6L14.9 17.5L13.8 19L9.2 18.9Z" fill="#4e6eb0"/><path d="M7.9 11.2L11.3 9.1L12.6 10.1L8.3 12Z" fill="#6aa8e8"/><path d="M8.3 12L14.9 17.5L13.8 19L9.2 18.9L7.2 16Z" fill="#76b8ee"/></svg>
<svg style="left:466.8px;top:54px" width="10" height="10" viewBox="0 0 10 10"><path d="M0.5 0.5L9.5 9.5M9.5 0.5L0.5 9.5" stroke="#6e7173" stroke-width="1.2"/></svg>
<svg style="left:585.1px;top:54px" width="10" height="10" viewBox="0 0 10 10"><path d="M0.5 0.5L9.5 9.5M9.5 0.5L0.5 9.5" stroke="#6e7173" stroke-width="1.2"/></svg>
<svg style="left:776.6px;top:54px" width="10" height="10" viewBox="0 0 10 10"><path d="M0.5 0.5L9.5 9.5M9.5 0.5L0.5 9.5" stroke="#6e7173" stroke-width="1.2"/></svg>
<svg style="left:948px;top:54px" width="10" height="10" viewBox="0 0 10 10"><path d="M0.5 0.5L9.5 9.5M9.5 0.5L0.5 9.5" stroke="#6e7173" stroke-width="1.2"/></svg>
<svg style="left:1073.9px;top:54px" width="10" height="10" viewBox="0 0 10 10"><path d="M0.5 0.5L9.5 9.5M9.5 0.5L0.5 9.5" stroke="#6e7173" stroke-width="1.2"/></svg>
<div class="a" style="left:407px;top:76px;width:1px;height:573px;background:#555555;"></div>
<svg style="left:401px;top:84.0px" width="12" height="13" viewBox="0 0 12 13"><path d="M0.5 0.5H11.5V7.5L6 12.5L0.5 7.5Z" fill="#2b2b2b" stroke="#666666" stroke-width="1"/><rect x="3.5" y="5" width="5" height="1" fill="#777777"/></svg>
<svg style="left:401px;top:107.75px" width="12" height="13" viewBox="0 0 12 13"><path d="M0.5 12.5H11.5V5.5L6 0.5L0.5 5.5Z" fill="#2b2b2b" stroke="#666666" stroke-width="1"/><rect x="3.5" y="7" width="5" height="1" fill="#777777"/></svg>
<svg style="left:401px;top:162.75px" width="12" height="13" viewBox="0 0 12 13"><path d="M0.5 0.5H11.5V7.5L6 12.5L0.5 7.5Z" fill="#2b2b2b" stroke="#666666" stroke-width="1"/><rect x="3.5" y="5" width="5" height="1" fill="#777777"/></svg>
<svg style="left:401px;top:372.75px" width="12" height="13" viewBox="0 0 12 13"><path d="M0.5 0.5H11.5V7.5L6 12.5L0.5 7.5Z" fill="#2b2b2b" stroke="#666666" stroke-width="1"/><rect x="3.5" y="5" width="5" height="1" fill="#777777"/></svg>
<svg style="left:401px;top:399.0px" width="12" height="13" viewBox="0 0 12 13"><path d="M0.5 0.5H11.5V7.5L6 12.5L0.5 7.5Z" fill="#2b2b2b" stroke="#666666" stroke-width="1"/><rect x="3.5" y="5" width="5" height="1" fill="#777777"/></svg>
<svg style="left:401px;top:425.25px" width="12" height="13" viewBox="0 0 12 13"><path d="M0.5 0.5H11.5V7.5L6 12.5L0.5 7.5Z" fill="#2b2b2b" stroke="#666666" stroke-width="1"/><rect x="3.5" y="5" width="5" height="1" fill="#777777"/></svg>
<svg style="left:401px;top:475.25px" width="12" height="13" viewBox="0 0 12 13"><path d="M0.5 12.5H11.5V5.5L6 0.5L0.5 5.5Z" fill="#2b2b2b" stroke="#666666" stroke-width="1"/><rect x="3.5" y="7" width="5" height="1" fill="#777777"/></svg>
<svg style="left:401px;top:554.0px" width="12" height="13" viewBox="0 0 12 13"><path d="M0.5 12.5H11.5V5.5L6 0.5L0.5 5.5Z" fill="#2b2b2b" stroke="#666666" stroke-width="1"/><rect x="3.5" y="7" width="5" height="1" fill="#777777"/></svg>
<svg style="left:401px;top:580.25px" width="12" height="13" viewBox="0 0 12 13"><path d="M0.5 12.5H11.5V5.5L6 0.5L0.5 5.5Z" fill="#2b2b2b" stroke="#666666" stroke-width="1"/><rect x="3.5" y="7" width="5" height="1" fill="#777777"/></svg>
<svg style="left:426.6px;top:240.8px" width="14" height="20" viewBox="0 0 14 20"><circle cx="6.4" cy="6.3" r="6.3" fill="#f0a732"/><path d="M3.2 9.5H9.6L9 13H3.8Z" fill="#f0a732"/><rect x="3.4" y="13.6" width="6" height="1.5" fill="#afb1b3"/><rect x="3.9" y="15.8" width="5" height="2.4" fill="#8c8c8c"/></svg>
<svg style="left:369px;top:371px" width="18" height="16" viewBox="0 0 18 16"><circle cx="6" cy="6.5" r="5" fill="#3a9ac2"/><circle cx="6" cy="6.5" r="1.8" fill="none" stroke="#1f5a73" stroke-width="1"/><path d="M13 14V2.5" stroke="#c9504d" stroke-width="1.9"/><path d="M9.9 3.7L13 -0.6L16.1 3.7Z" fill="#d65a55"/></svg>
<div class="a" style="left:443px;top:417px;width:1px;height:92px;background:#5a5a5a;"></div>
<div class="a" style="left:443px;top:509px;width:46px;height:1px;background:#6a6a6a;"></div>
<div class="a" style="left:443px;top:510px;width:1px;height:39px;background:#404040;"></div>
<svg style="left:476px;top:176.25px" width="113" height="4" viewBox="0 0 113 4"><path d="M0.00 2.40 L1.80 0.00 L3.60 2.40 L5.40 0.00 L7.20 2.40 L9.00 0.00 L10.80 2.40 L12.60 0.00 L14.40 2.40 L16.20 0.00 L18.00 2.40 L19.80 0.00 L21.60 2.40 L23.40 0.00 L25.20 2.40 L27.00 0.00 L28.80 2.40 L30.60 0.00 L32.40 2.40 L34.20 0.00 L36.00 2.40 L37.80 0.00 L39.60 2.40 L41.40 0.00 L43.20 2.40 L45.00 0.00 L46.80 2.40 L48.60 0.00 L50.40 2.40 L52.20 0.00 L54.00 2.40 L55.80 0.00 L57.60 2.40 L59.40 0.00 L61.20 2.40 L63.00 0.00 L64.80 2.40 L66.60 0.00 L68.40 2.40 L70.20 0.00 L72.00 2.40 L73.80 0.00 L75.60 2.40 L77.40 0.00 L79.20 2.40 L81.00 0.00 L82.80 2.40 L84.60 0.00 L86.40 2.40 L88.20 0.00 L90.00 2.40 L91.80 0.00 L93.60 2.40 L95.40 0.00 L97.20 2.40 L99.00 0.00 L100.80 2.40 L102.60 0.00 L104.40 2.40 L106.20 0.00 L108.00 2.40 L109.80 0.00 L111.60 2.40" fill="none" stroke="#8f8c5f" stroke-width="1.0"/></svg>
<svg style="left:556px;top:228.75px" width="63" height="4" viewBox="0 0 63 4"><path d="M0.00 2.40 L1.80 0.00 L3.60 2.40 L5.40 0.00 L7.20 2.40 L9.00 0.00 L10.80 2.40 L12.60 0.00 L14.40 2.40 L16.20 0.00 L18.00 2.40 L19.80 0.00 L21.60 2.40 L23.40 0.00 L25.20 2.40 L27.00 0.00 L28.80 2.40 L30.60 0.00 L32.40 2.40 L34.20 0.00 L36.00 2.40 L37.80 0.00 L39.60 2.40 L41.40 0.00 L43.20 2.40 L45.00 0.00 L46.80 2.40 L48.60 0.00 L50.40 2.40 L52.20 0.00 L54.00 2.40 L55.80 0.00 L57.60 2.40 L59.40 0.00 L61.20 2.40" fill="none" stroke="#bc3f3c" stroke-width="1.0"/></svg>
<svg style="left:436px;top:281.25px" width="113" height="4" viewBox="0 0 113 4"><path d="M0.00 2.40 L1.80 0.00 L3.60 2.40 L5.40 0.00 L7.20 2.40 L9.00 0.00 L10.80 2.40 L12.60 0.00 L14.40 2.40 L16.20 0.00 L18.00 2.40 L19.80 0.00 L21.60 2.40 L23.40 0.00 L25.20 2.40 L27.00 0.00 L28.80 2.40 L30.60 0.00 L32.40 2.40 L34.20 0.00 L36.00 2.40 L37.80 0.00 L39.60 2.40 L41.40 0.00 L43.20 2.40 L45.00 0.00 L46.80 2.40 L48.60 0.00 L50.40 2.40 L52.20 0.00 L54.00 2.40 L55.80 0.00 L57.60 2.40 L59.40 0.00 L61.20 2.40 L63.00 0.00 L64.80 2.40 L66.60 0.00 L68.40 2.40 L70.20 0.00 L72.00 2.40 L73.80 0.00 L75.60 2.40 L77.40 0.00 L79.20 2.40 L81.00 0.00 L82.80 2.40 L84.60 0.00 L86.40 2.40 L88.20 0.00 L90.00 2.40 L91.80 0.00 L93.60 2.40 L95.40 0.00 L97.20 2.40 L99.00 0.00 L100.80 2.40 L102.60 0.00 L104.40 2.40 L106.20 0.00 L108.00 2.40 L109.80 0.00 L111.60 2.40" fill="none" stroke="#a0965a" stroke-width="1.0"/></svg>
<svg style="left:566px;top:281.25px" width="113" height="4" viewBox="0 0 113 4"><path d="M0.00 2.40 L1.80 0.00 L3.60 2.40 L5.40 0.00 L7.20 2.40 L9.00 0.00 L10.80 2.40 L12.60 0.00 L14.40 2.40 L16.20 0.00 L18.00 2.40 L19.80 0.00 L21.60 2.40 L23.40 0.00 L25.20 2.40 L27.00 0.00 L28.80 2.40 L30.60 0.00 L32.40 2.40 L34.20 0.00 L36.00 2.40 L37.80 0.00 L39.60 2.40 L41.40 0.00 L43.20 2.40 L45.00 0.00 L46.80 2.40 L48.60 0.00 L50.40 2.40 L52.20 0.00 L54.00 2.40 L55.80 0.00 L57.60 2.40 L59.40 0.00 L61.20 2.40 L63.00 0.00 L64.80 2.40 L66.60 0.00 L68.40 2.40 L70.20 0.00 L72.00 2.40 L73.80 0.00 L75.60 2.40 L77.40 0.00 L79.20 2.40 L81.00 0.00 L82.80 2.40 L84.60 0.00 L86.40 2.40 L88.20 0.00 L90.00 2.40 L91.80 0.00 L93.60 2.40 L95.40 0.00 L97.20 2.40 L99.00 0.00 L100.80 2.40 L102.60 0.00 L104.40 2.40 L106.20 0.00 L108.00 2.40 L109.80 0.00 L111.60 2.40" fill="none" stroke="#bc3f3c" stroke-width="1.0"/></svg>
<svg style="left:556px;top:517.5px" width="103" height="4" viewBox="0 0 103 4"><path d="M0.00 2.40 L1.80 0.00 L3.60 2.40 L5.40 0.00 L7.20 2.40 L9.00 0.00 L10.80 2.40 L12.60 0.00 L14.40 2.40 L16.20 0.00 L18.00 2.40 L19.80 0.00 L21.60 2.40 L23.40 0.00 L25.20 2.40 L27.00 0.00 L28.80 2.40 L30.60 0.00 L32.40 2.40 L34.20 0.00 L36.00 2.40 L37.80 0.00 L39.60 2.40 L41.40 0.00 L43.20 2.40 L45.00 0.00 L46.80 2.40 L48.60 0.00 L50.40 2.40 L52.20 0.00 L54.00 2.40 L55.80 0.00 L57.60 2.40 L59.40 0.00 L61.20 2.40 L63.00 0.00 L64.80 2.40 L66.60 0.00 L68.40 2.40 L70.20 0.00 L72.00 2.40 L73.80 0.00 L75.60 2.40 L77.40 0.00 L79.20 2.40 L81.00 0.00 L82.80 2.40 L84.60 0.00 L86.40 2.40 L88.20 0.00 L90.00 2.40 L91.80 0.00 L93.60 2.40 L95.40 0.00 L97.20 2.40 L99.00 0.00 L100.80 2.40 L102.60 0.00" fill="none" stroke="#8f8c5f" stroke-width="1.0"/></svg>
<svg style="left:29px;top:696px" width="22" height="18" viewBox="0 0 22 18"><path d="M0.8 6.6Q9.7 -3.4 18.6 6.6Q9.7 16.6 0.8 6.6Z" fill="#afb1b3"/><circle cx="9.7" cy="6.6" r="3.9" fill="#3c3f41"/><circle cx="9.7" cy="6.6" r="2.4" fill="#afb1b3"/><path d="M14 14H21L17.5 17.8Z" fill="#afb1b3"/></svg>
<svg style="left:31px;top:727.5px" width="16" height="15" viewBox="0 0 16 15"><rect x="0" y="0" width="15.3" height="14.8" fill="#afb1b3"/><rect x="2.8" y="2.8" width="5.2" height="9.2" fill="#3c3f41"/></svg>
<svg style="left:32.8px;top:759.3px" width="13" height="18" viewBox="0 0 13 18"><circle cx="6.25" cy="5.8" r="5.8" fill="#535557"/><path d="M2.6 9H9.9L9.4 13H3.1Z" fill="#535557"/><rect x="2.8" y="13.8" width="6.9" height="1.4" fill="#535557"/><rect x="3.4" y="16" width="5.7" height="1.6" fill="#535557"/></svg>
<svg style="left:69px;top:689px" width="20" height="20" viewBox="0 0 20 20"><path d="M0 5.7L5.3 0V5.7Z" fill="#8a969d"/><path d="M6.3 0H12.3V18H0V6.7H6.3Z" fill="#8a969d"/><path d="M4.6 14.3L7.2 10.4L11 8L16.4 11.8L17.4 14.6L15.8 18.4L14.4 20.2L8.6 20.1Z" fill="#3c3f41"/><path d="M5.9 14.3L7.9 11.2L11.3 9.1L15.5 12.3L16.2 14.6L14.9 17.5L13.8 19L9.2 18.9Z" fill="#4e6eb0"/><path d="M7.9 11.2L11.3 9.1L12.6 10.1L8.3 12Z" fill="#6aa8e8"/><path d="M8.3 12L14.9 17.5L13.8 19L9.2 18.9L7.2 16Z" fill="#76b8ee"/></svg>
<svg style="left:92px;top:716.9px" width="13" height="13" viewBox="0 0 13 13"><circle cx="6.2" cy="6.2" r="6.2" fill="#ac302e"/><rect x="5.3" y="2.4" width="1.9" height="5.3" fill="#3c3f41"/><rect x="5.3" y="8.7" width="1.9" height="1.9" fill="#3c3f41"/></svg>
<svg style="left:92px;top:741.9px" width="13" height="13" viewBox="0 0 13 13"><circle cx="6.2" cy="6.2" r="6.2" fill="#ac302e"/><rect x="5.3" y="2.4" width="1.9" height="5.3" fill="#3c3f41"/><rect x="5.3" y="8.7" width="1.9" height="1.9" fill="#3c3f41"/></svg>
<svg style="left:92px;top:766.9px" width="13" height="13" viewBox="0 0 13 13"><circle cx="6.2" cy="6.2" r="6.2" fill="#ac302e"/><rect x="5.3" y="2.4" width="1.9" height="5.3" fill="#3c3f41"/><rect x="5.3" y="8.7" width="1.9" height="1.9" fill="#3c3f41"/></svg>
<svg style="left:91px;top:791.5px" width="15" height="14" viewBox="0 0 15 14"><path d="M7.2 0.3L14.4 13.2H0Z" fill="#857a5c"/><rect x="6.3" y="4.5" width="1.8" height="4.6" fill="#3c3f41"/><rect x="6.3" y="10.2" width="1.8" height="1.8" fill="#3c3f41"/></svg>
<svg style="left:91px;top:816.5px" width="15" height="14" viewBox="0 0 15 14"><path d="M7.2 0.3L14.4 13.2H0Z" fill="#857a5c"/><rect x="6.3" y="4.5" width="1.8" height="4.6" fill="#0d293e"/><rect x="6.3" y="10.2" width="1.8" height="1.8" fill="#0d293e"/></svg>
<svg style="left:91px;top:841.5px" width="15" height="14" viewBox="0 0 15 14"><path d="M7.2 0.3L14.4 13.2H0Z" fill="#857a5c"/><rect x="6.3" y="4.5" width="1.8" height="4.6" fill="#3c3f41"/><rect x="6.3" y="10.2" width="1.8" height="1.8" fill="#3c3f41"/></svg></body></html>
